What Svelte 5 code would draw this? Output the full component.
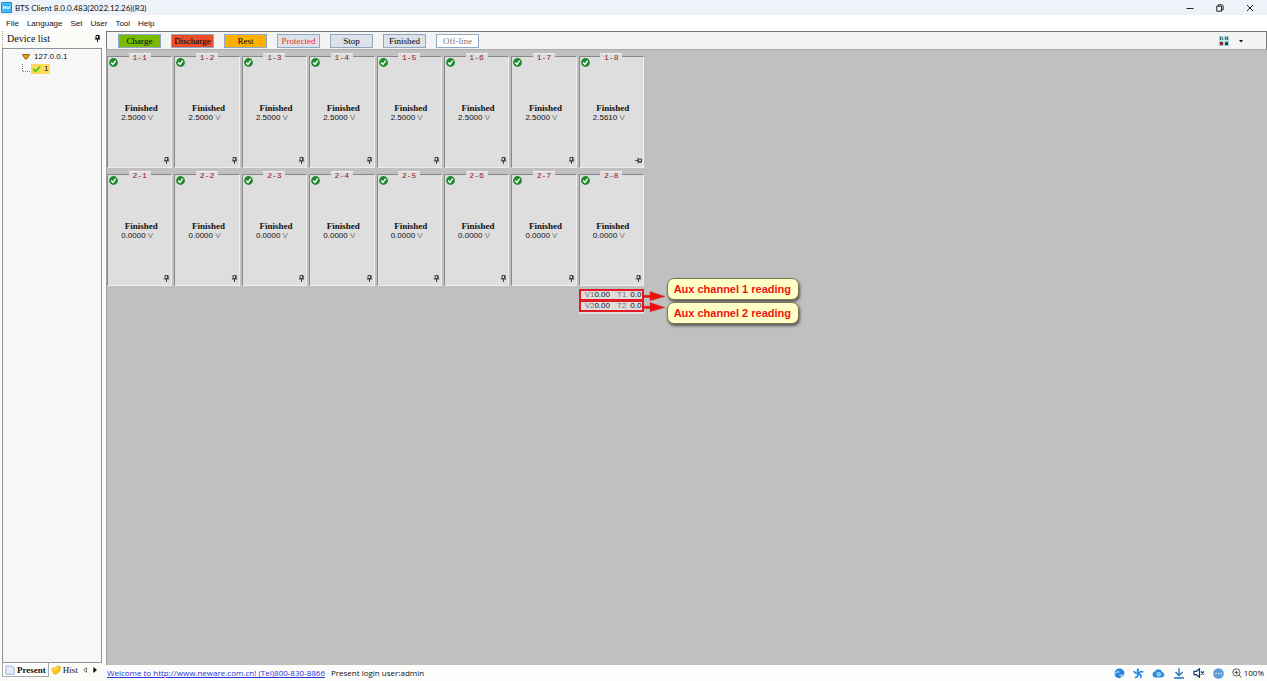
<script>
  const menus = ['File', 'Language', 'Set', 'User', 'Tool', 'Help'];
  const states = ['Charge', 'Discharge', 'Rest', 'Protected', 'Stop', 'Finished', 'Off-line'];
  const channels = [1, 2].flatMap((unit) =>
    Array.from({ length: 8 }, (_, i) => ({
      id: `${unit}-${i + 1}`,
      volts: unit === 2 ? '0.0000' : i === 7 ? '2.5610' : '2.5000',
      unpinned: unit === 1 && i === 7
    }))
  );
  const aux = [1, 2];
</script>

{#snippet pin(kind)}
  <svg class="pin {kind}" width="7" height="7" viewBox="0 0 7 7" aria-hidden="true">
    <path d="M2 .5h3v3H2zM.8 4h5.4M3.5 4v3" fill="none" stroke="currentColor" />
    <path d="M4 .5h1.4v3H4z" fill="currentColor" />
  </svg>
{/snippet}

<div class="app">
  <header class="titlebar">
    <svg width="11" height="11" viewBox="0 0 11 11" aria-hidden="true">
      <rect width="11" height="11" rx="1" fill="#0b8fe0" />
      <rect x="1.5" y="1.5" width="8" height="8" fill="#35b4f5" stroke="#8bd8ff" stroke-width=".6" />
      <path d="M2.5 7V4l2 3V4M5.5 4l.8 3 .8-2 .8 2 .7-3" stroke="#fff" fill="none" stroke-width=".8" />
    </svg>
    <h1>BTS Client 8.0.0.483(2022.12.26)(R3)</h1>
    <div class="window-buttons">
      <button aria-label="Minimize"><svg width="8" height="8" viewBox="0 0 8 8"><path d="M.5 4.5h7" /></svg></button>
      <button aria-label="Restore"><svg width="8" height="8" viewBox="0 0 8 8"><path d="M.8 2.2h4.7v5H.8zM2.2 2V.8h3.5q1.5 0 1.5 1.5v3.5H5.7" /></svg></button>
      <button aria-label="Close"><svg width="8" height="8" viewBox="0 0 8 8"><path d="M1 1l6 6M7 1L1 7" /></svg></button>
    </div>
  </header>

  <nav class="menubar">
    {#each menus as menu}<button>{menu}</button>{/each}
  </nav>

  <div class="body">
    <aside>
      <div class="side-head">
        <h2>Device list</h2>
        {@render pin('dark')}
      </div>
      <div class="tree">
        <div class="node">
          <svg width="8" height="6" viewBox="0 0 8 6" aria-hidden="true"><path d="M.5.6h7L5 4.8H3z" fill="#e8a80c" stroke="#7a5208" stroke-width=".9" /></svg>
          <span>127.0.0.1</span>
        </div>
        <div class="node child">
          <svg width="8" height="10" viewBox="0 0 8 10" aria-hidden="true"><path d="M.5 0v7.5H8" fill="none" stroke="#777" stroke-dasharray="1 1" /></svg>
          <span class="selected">
            <svg width="9" height="8" viewBox="0 0 9 8" aria-hidden="true"><path d="M1 4l2.4 2.3L8 1.8" fill="none" stroke="#5fd016" stroke-width="2" /></svg>
            1
          </span>
        </div>
      </div>
      <div class="tabs">
        <button class="tab active">
          <svg width="10" height="10" viewBox="0 0 10 10" aria-hidden="true"><path d="M.8 1h6.5L9.2 3v6.2H.8z" fill="#e5edfa" stroke="#9db4d8" /></svg>
          Present
        </button>
        <button class="tab">
          <svg width="10" height="10" viewBox="0 0 10 10" aria-hidden="true"><path d="M.8 3.5L5 2.8 6 1l3.3.6-.2 4.2L5.2 9.2 2.8 8.8z" fill="#ffc91c" stroke="#dc9c0b" stroke-width=".7" /><path d="M2 4.4l3.4-.6L7 2" fill="none" stroke="#fff0a0" /></svg>
          Hist
        </button>
        <button class="arrow" aria-label="Previous tab"><svg width="4" height="6" viewBox="0 0 4 6"><path d="M3.5.6v4.8L.7 3z" fill="none" stroke="#444" stroke-width=".7" /></svg></button>
        <button class="arrow" aria-label="Next tab"><svg width="4" height="6" viewBox="0 0 4 6"><path d="M.3 0v6L4 3z" fill="#111" /></svg></button>
      </div>
    </aside>

    <main>
      <div class="toolbar">
        {#each states as state}
          <button class="state {state.toLowerCase()}">{state}</button>
        {/each}
        <button class="view" aria-label="View">
          <svg width="10" height="10" viewBox="0 0 10 10">
            <rect width="10" height="10" fill="#8fd0d6" />
            <path d="M0 4.8h10M5 0v10" stroke="#eafafa" stroke-width=".8" />
            <path d="M1 1h1v3H1zM3 2h1v2H3zM6 1h1v3H6zM8 1h1v3H8z" fill="#3d6f80" />
            <path d="M6 7l1.5-1.5L9 7v2H6z" fill="#123a4c" />
            <path d="M1 6h3v3H1z" fill="#8f2530" />
            <path d="M7 1h1v2H7zM2 1h1v1H2z" fill="#c98080" />
          </svg>
          <svg width="4" height="3" viewBox="0 0 4 3"><path d="M0 0h4L2 2.5z" fill="#111" /></svg>
        </button>
      </div>

      <div class="canvas">
        <div class="grid">
          {#each channels as ch}
            <section class="cell">
              <h3>{ch.id}</h3>
              <svg class="ok" width="9" height="9" viewBox="0 0 9 9" aria-hidden="true">
                <circle cx="4.5" cy="4.5" r="4.4" fill="#1f8a2c" />
                <path d="M2.2 4.4l1.8 2 2.7-3.8" fill="none" stroke="#fff" stroke-width="1.5" />
              </svg>
              <p class="status">Finished</p>
              <p class="volts">{ch.volts} <span>V</span></p>
              {@render pin(ch.unpinned ? 'flat' : 'upright')}
            </section>
          {/each}
          <section class="aux">
            {#each aux as n}
              <div class="reading">
                <span>V{n}</span><b>0.00</b><span class="temp">T{n}</span><b>0.0</b>
                <svg class="pointer" width="24" height="10" viewBox="0 0 24 10" aria-hidden="true">
                  <path d="M0 4.2h8V.6L23 5.4 8 9.8V6.4H0z" fill="#f50d0d" stroke="#a33" stroke-width=".4" />
                </svg>
                <div class="callout">Aux channel {n} reading</div>
              </div>
            {/each}
          </section>
        </div>
      </div>

      <footer>
        <a href="http://www.neware.com.cn">Welcome to http://www.neware.com.cn! (Tel)800-830-8866</a>
        <span>Present login user:admin</span>
        <div class="tray">
          <svg width="11" height="11" viewBox="0 0 11 11" aria-hidden="true"><path d="M5.5.5a5 5 0 015 5q0 1.3-1.4 1.3H5.2q.3 1.5 2.7 1.9-1.4 1.8-3.6 1.4A5 5 0 01.5 5.5 5 5 0 015.5.5z" fill="#2784dc" /><path d="M1 6.2c.8-2.8 3.4-2.9 4.4-1.8" fill="none" stroke="#91d5f8" stroke-width="1.3" /><path d="M6.2 7.8h4" stroke="#81bff0" stroke-width="1.4" /></svg>
          <svg width="11" height="11" viewBox="0 0 11 11" aria-hidden="true"><g fill="none" stroke="#258be5" stroke-width="1.7"><path d="M5.5 5.5Q3.4 3 5.6.6M5.5 5.5Q7.4 2.8 10.3 4M5.5 5.5Q8.8 7 7.6 10M5.5 5.5Q5.2 8.9 2 9.6M5.5 5.5Q2.2 6 .8 3.2" /></g></svg>
          <svg width="13" height="10" viewBox="0 0 13 10" aria-hidden="true"><path d="M3.2 9.5A3 3 0 012.8 3.6 4 4 0 0110.2 4a2.8 2.8 0 01-.4 5.5z" fill="#2f8de0" /><circle cx="6.8" cy="6.2" r="1.8" fill="#77c2f5" stroke="#d8efff" stroke-width=".7" /></svg>
          <svg width="12" height="11" viewBox="0 0 12 11" aria-hidden="true"><path d="M6 0v7.3M2.5 4L6 7.5 9.5 4M1 10h10" fill="none" stroke="#2372b8" stroke-width="1.3" /></svg>
          <svg width="12" height="10" viewBox="0 0 12 10" aria-hidden="true"><path d="M1 3.3h2.3L6.5.8v8.4L3.3 6.7H1zM8 3.3l3 3.4M11 3.3L8 6.7" fill="none" stroke="#14376f" stroke-width="1.2" /></svg>
          <svg class="chat" width="11" height="11" viewBox="0 0 11 11" aria-hidden="true"><circle cx="5.5" cy="5.5" r="5.3" fill="#5b9cd6" /><path d="M2.4 5.5h1.3M4.9 5.5h1.3M7.4 5.5h1.3" stroke="#d7ecfc" stroke-width="1.3" /></svg>
          <button class="zoom">
            <svg width="10" height="10" viewBox="0 0 10 10" aria-hidden="true"><path d="M4.4.8a3.6 3.6 0 100 7.2 3.6 3.6 0 000-7.2zM7 7l2.5 2.5M2.6 4.4h3.6M4.4 2.6v3.6" fill="none" stroke="#333" stroke-width=".8" /></svg>
            100%
          </button>
        </div>
      </footer>
    </main>
  </div>
</div>

<style>
  :global(body) { margin: 0; }
  .app {
    height: 100vh;
    display: flex;
    flex-direction: column;
    overflow: hidden;
    background: #fff;
    color: #111;
    font: 8px/10px "Liberation Sans", Arial, sans-serif;
    white-space: nowrap;
  }
  h1, h2, h3, p { margin: 0; font-weight: 400; }
  button {
    border: 0;
    padding: 0;
    background: none;
    color: inherit;
    font: inherit;
  }
  svg { display: block; flex: none; }

  .titlebar {
    height: 15px;
    display: flex;
    align-items: center;
    gap: 3px;
    padding-left: 1px;
    background: #eef3f9;
  }
  h1 { font: 8px/12px Lato, sans-serif; }
  .window-buttons { display: flex; margin-left: auto; padding-right: 2px; }
  .window-buttons button { width: 30px; display: grid; place-items: center; }
  .window-buttons path { fill: none; stroke: #222; stroke-width: 1; }

  .menubar { height: 16px; display: flex; align-items: center; gap: 8px; padding: 2px 6px 0; box-sizing: border-box; }

  .body { flex: 1; min-height: 0; display: flex; }
  aside {
    width: 106px;
    flex: none;
    box-sizing: border-box;
    display: flex;
    flex-direction: column;
    padding: 0 4px 4px 2px;
    background: #fbfbf7;
    font-family: "Liberation Serif", serif;
  }
  .side-head { height: 17px; display: flex; justify-content: space-between; padding: 0 1px 0 4px; border-left: 1px dotted #aaa; }
  h2 { font: 10px/16px "Liberation Serif", serif; }
  .pin { color: #444; }
  .dark { margin-top: 4px; color: #111; }
  .tree {
    flex: 1;
    padding: 2px 0 0 19px;
    border: 1px solid #8d929b;
    background: #f7f7f7;
  }
  .node { height: 12px; display: flex; align-items: center; gap: 4px; font: 8px/10px "Liberation Sans", sans-serif; }
  .child { gap: 1px; }
  .selected { display: flex; align-items: center; gap: 3px; padding: 0 2px 0 1px; background: #ffdb5c; }
  .tabs { height: 14px; display: flex; align-items: center; font: 9px/12px "Liberation Serif", serif; }
  .tab { height: 14px; display: flex; align-items: center; gap: 2px; padding: 0 2px; }
  .active { box-sizing: border-box; border: 1px solid #aaa; border-top: 0; background: #fff; font-weight: 700; }
  .arrow { padding: 0 3px; }

  main { flex: 1; min-width: 0; display: flex; flex-direction: column; }
  .toolbar {
    height: 19px;
    box-sizing: border-box;
    display: flex;
    align-items: center;
    gap: 10px;
    padding: 1px 23px 0 11px;
    border: 1px solid #777;
    border-bottom-color: #ababab;
    background: #f4f4f4;
  }
  .state {
    width: 43px;
    height: 14px;
    border: 1px solid #8da9c6;
    background: #dde1e8;
    font: 9px/12px "Liberation Serif", serif;
    color: #000;
  }
  .charge { background: #7bb800; }
  .discharge { background: #ea4d2a; }
  .rest { background: #ffb000; }
  .protected { color: #f22; }
  .off-line { background: #fff; color: #777; }
  .view { display: flex; align-items: center; gap: 10px; margin-left: auto; }

  .canvas {
    flex: 1;
    min-height: 0;
    padding-top: 6px;
    border-left: 1px solid #a0a0a0;
    box-sizing: border-box;
    background: #c0c0c0;
  }
  .grid { width: 537px; display: grid; grid-template-columns: repeat(8, 1fr); gap: 6px 2px; }
  .cell {
    position: relative;
    height: 112px;
    box-sizing: border-box;
    border: 1px solid #eee;
    border-top-color: #888;
    border-left-color: #888;
    background: #dedede;
    text-align: center;
  }
  h3 {
    position: absolute;
    top: -4px;
    left: 50%;
    transform: translateX(-50%);
    width: 22px;
    height: 8px;
    border-top: 1px solid #eee;
    background: #dedede;
    color: #8b1a2a;
    font: 8px/8px "Liberation Mono", monospace;
  }
  .ok { position: absolute; top: 1px; left: 1px; }
  .status { padding: 46px 0 0 3px; font: 700 9px/10px "Liberation Serif", serif; }
  .volts { padding-right: 5px; line-height: 9px; }
  .volts span { color: #777; }
  .cell .pin { position: absolute; right: 1px; bottom: 3px; }
  .flat { transform: rotate(90deg); }

  .aux {
    grid-column: 8;
    margin-top: -3px;
    padding-bottom: 2px;
    background: #dedede;
  }
  .reading {
    position: relative;
    height: 12px;
    box-sizing: border-box;
    display: flex;
    align-items: center;
    padding-left: 4px;
    border: 2px solid #e01b24;
  }
  .reading + .reading { margin-top: -1px; }
  .reading span { color: #777; }
  .reading b { font-weight: 400; }
  .reading .temp { margin: 0 4px 0 7px; }
  .pointer { position: absolute; left: 100%; top: 0; z-index: 1; }
  .callout {
    position: absolute;
    left: 86px;
    top: -13px;
    padding: 0 7px 0 6px;
    border: 1px solid #777750;
    border-radius: 7px;
    background: #ffffc6;
    box-shadow: 1px 2px 3px #555;
    color: #f01212;
    font: 700 11px/20px "Liberation Sans", sans-serif;
  }
  .reading + .reading .callout { top: 0; }

  footer {
    height: 16px;
    display: flex;
    align-items: center;
    gap: 6px;
    background: #fcfcfa;
    font: 8px/12px "Open Sans", sans-serif;
    padding: 0 3px 0 1px;
  }
  footer a { color: #2a35d8; }
  .tray { display: flex; align-items: center; gap: 8px; margin-left: auto; }
  .zoom { display: flex; align-items: center; gap: 2px; }
</style>
